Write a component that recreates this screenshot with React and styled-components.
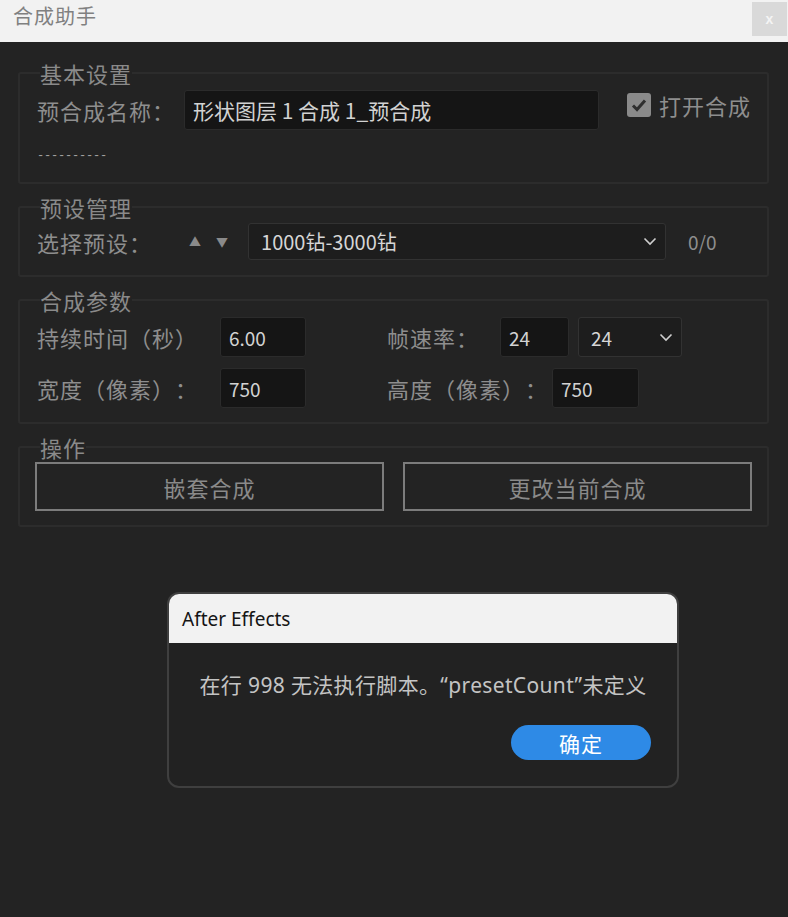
import React from "react";
import styled, { createGlobalStyle } from "styled-components";

const Global = createGlobalStyle`
  html, body { margin: 0; padding: 0; }
  body {
    background: #232323;
    font-family: "Noto Sans CJK SC", "Noto Sans", sans-serif;
    text-spacing-trim: space-all;
  }
`;

const Page = styled.div`
  position: relative;
  width: 788px;
  height: 917px;
  background: #232323;
  overflow: hidden;
`;

const TitleBar = styled.div`
  height: 42px;
  background: #f2f2f2;
  display: flex;
  justify-content: space-between;
  align-items: flex-start;
`;

const Title = styled.div`
  padding-left: 13px;
  padding-top: 4px;
  font-size: 20px;
  line-height: 24px;
  letter-spacing: 1px;
  color: #808080;
`;

const CloseBtn = styled.div`
  width: 35px;
  height: 34px;
  margin-top: 2px;
  margin-right: 1px;
  background: #d9d9d9;
  color: #f4f4f4;
  font-family: "Liberation Sans", sans-serif;
  font-weight: bold;
  font-size: 14px;
  display: flex;
  align-items: center;
  justify-content: center;
`;

const Content = styled.div`
  padding: 20px 19px 0 18px;
  display: flex;
  flex-direction: column;
  gap: 12px;
`;

const Group = styled.fieldset`
  margin: 0;
  padding: 0;
  border: 2px solid #2c2c2c;
  border-radius: 3px;
  min-width: 0;
`;

const Legend = styled.legend`
  margin-left: 20px;
  padding: 0;
  font-size: 22px;
  line-height: 22px;
  letter-spacing: 1px;
  color: #8a8a8a;
`;

const Inner = styled.div`
  display: flex;
  flex-direction: column;
  gap: ${(p) => p.$gap || 0}px;
  padding: ${(p) => p.$pt}px ${(p) => p.$pr || 17}px ${(p) => p.$pb}px ${(p) => p.$pl || 17}px;
`;

const Row = styled.div`
  display: flex;
  align-items: ${(p) => p.$align || "center"};
`;

const Label = styled.div`
  flex: none;
  width: ${(p) => (p.$w ? p.$w + "px" : "auto")};
  margin-top: ${(p) => p.$mt || 0}px;
  font-size: 22px;
  line-height: 24px;
  letter-spacing: 1px;
  color: #8e8e8e;
  white-space: nowrap;
`;

const TextInput = styled.div`
  flex: none;
  box-sizing: border-box;
  width: ${(p) => p.$w}px;
  height: 40px;
  background: #151515;
  border: 1px solid #2b2b2b;
  border-radius: 3px;
  padding-left: 8px;
  display: flex;
  align-items: center;
  font-size: ${(p) => p.$fs || 19}px;
  color: #d2d2d2;
  white-space: nowrap;
`;

const Select = styled.div`
  flex: none;
  box-sizing: border-box;
  width: ${(p) => p.$w}px;
  height: ${(p) => p.$h || 40}px;
  margin-left: ${(p) => p.$ml || 0}px;
  background: #1d1d1d;
  border: 1px solid #323232;
  border-radius: 3px;
  padding: 0 8px 0 12px;
  display: flex;
  align-items: center;
  justify-content: space-between;
  font-size: ${(p) => p.$fs || 19}px;
  color: #d6d6d6;
  white-space: nowrap;
`;

const Chevron = () => (
  <svg width="14" height="9" viewBox="0 0 14 9">
    <polyline points="1.5,1.5 7,7 12.5,1.5" fill="none" stroke="#cfcfcf" strokeWidth="1.6" />
  </svg>
);

const CheckWrap = styled.div`
  flex: none;
  display: flex;
  align-items: center;
  gap: 8px;
  margin-left: 28px;
  margin-top: 3px;
`;

const CheckBox = styled.div`
  flex: none;
  width: 24px;
  height: 24px;
  border-radius: 3px;
  background: #8a8a8a;
  display: flex;
  align-items: center;
  justify-content: center;
`;

const CheckLabel = styled.div`
  font-size: 22px;
  line-height: 24px;
  letter-spacing: 1px;
  color: #8e8e8e;
  white-space: nowrap;
`;

const Dashes = styled.div`
  font-family: "Liberation Mono", monospace;
  font-size: 12px;
  line-height: 22px;
  letter-spacing: -0.2px;
  color: #a0a0a0;
  margin-top: 15px;
`;

const Arrows = styled.div`
  display: flex;
  gap: 15px;
  margin-left: 4px;
  color: #8a8a8a;
  font-size: 12px;
`;

const Counter = styled.div`
  margin-left: 22px;
  font-size: 19px;
  color: #8e8e8e;
`;

const Half = styled.div`
  flex: none;
  width: ${(p) => (p.$w ? p.$w + "px" : "auto")};
  display: flex;
  align-items: center;
`;

const ActionRow = styled.div`
  display: flex;
  gap: 19px;
`;

const ActionBtn = styled.div`
  flex: 1;
  height: 49px;
  box-sizing: border-box;
  border: 2px solid #7c7c7c;
  display: flex;
  align-items: center;
  justify-content: center;
  font-size: 22px;
  letter-spacing: 1px;
  color: #8a8a8a;
`;

const Dialog = styled.div`
  position: absolute;
  left: 167px;
  top: 592px;
  width: 512px;
  height: 196px;
  box-sizing: border-box;
  border: 2px solid #3f3f3f;
  border-radius: 12px;
  overflow: hidden;
  background: #222222;
  display: flex;
  flex-direction: column;
`;

const DialogHead = styled.div`
  height: 49px;
  background: #f2f2f2;
  display: flex;
  align-items: center;
  padding-left: 13px;
  font-family: "Noto Sans", "Open Sans", sans-serif;
  font-size: 19px;
  color: #151515;
`;

const DialogMsg = styled.div`
  margin-top: 25px;
  text-align: center;
  font-family: "Noto Sans", "Noto Sans CJK SC", sans-serif;
  font-size: 21px;
  line-height: 34px;
  letter-spacing: 0.35px;
  color: #c4c4c4;
  white-space: nowrap;
`;

const DialogFoot = styled.div`
  display: flex;
  justify-content: flex-end;
  padding-right: 26px;
  margin-top: 23px;
`;

const OkBtn = styled.div`
  width: 140px;
  height: 35px;
  border-radius: 18px;
  background: #2e8ae6;
  color: #ffffff;
  display: flex;
  align-items: center;
  justify-content: center;
  font-size: 21px;
  letter-spacing: 1px;
`;

export default function App() {
  return (
    <Page>
      <Global />
      <TitleBar>
        <Title>合成助手</Title>
        <CloseBtn>x</CloseBtn>
      </TitleBar>
      <Content>
        <Group>
          <Legend>基本设置</Legend>
          <Inner $pt={6} $pb={15}>
            <Row $align="flex-start">
              <Label $w={147} $mt={8}>预合成名称：</Label>
              <TextInput $w={415} $fs={21}>形状图层 1 合成 1_预合成</TextInput>
              <CheckWrap>
                <CheckBox>
                  <svg width="18" height="16" viewBox="0 0 18 16">
                    <polyline points="3,8.5 7,12.5 15,3.5" fill="none" stroke="#2e2e2e" strokeWidth="3" />
                  </svg>
                </CheckBox>
                <CheckLabel>打开合成</CheckLabel>
              </CheckWrap>
            </Row>
            <Dashes>----------</Dashes>
          </Inner>
        </Group>

        <Group>
          <Legend>预设管理</Legend>
          <Inner $pt={5} $pb={15}>
            <Row>
              <Label $w={148}>选择预设：</Label>
              <Arrows>
                <span>▲</span>
                <span>▼</span>
              </Arrows>
              <Select $w={418} $h={37} $ml={20} $fs={20}>
                <span>1000钻-3000钻</span>
                <Chevron />
              </Select>
              <Counter>0/0</Counter>
            </Row>
          </Inner>
        </Group>

        <Group>
          <Legend>合成参数</Legend>
          <Inner $pt={6} $pb={14} $gap={11}>
            <Row>
              <Half $w={350}>
                <Label $w={183}>持续时间（秒）</Label>
                <TextInput $w={86}>6.00</TextInput>
              </Half>
              <Half>
                <Label $w={113}>帧速率：</Label>
                <TextInput $w={69}>24</TextInput>
                <Select $w={104} $ml={9}>
                  <span>24</span>
                  <Chevron />
                </Select>
              </Half>
            </Row>
            <Row>
              <Half $w={350}>
                <Label $w={183}>宽度（像素）：</Label>
                <TextInput $w={86}>750</TextInput>
              </Half>
              <Half>
                <Label $w={165}>高度（像素）：</Label>
                <TextInput $w={87}>750</TextInput>
              </Half>
            </Row>
          </Inner>
        </Group>

        <Group>
          <Legend>操作</Legend>
          <Inner $pt={4} $pb={14} $pl={15} $pr={15}>
            <ActionRow>
              <ActionBtn>嵌套合成</ActionBtn>
              <ActionBtn>更改当前合成</ActionBtn>
            </ActionRow>
          </Inner>
        </Group>
      </Content>

      <Dialog>
        <DialogHead>After Effects</DialogHead>
        <DialogMsg>在行 998 无法执行脚本。“presetCount”未定义</DialogMsg>
        <DialogFoot>
          <OkBtn>确定</OkBtn>
        </DialogFoot>
      </Dialog>
    </Page>
  );
}
